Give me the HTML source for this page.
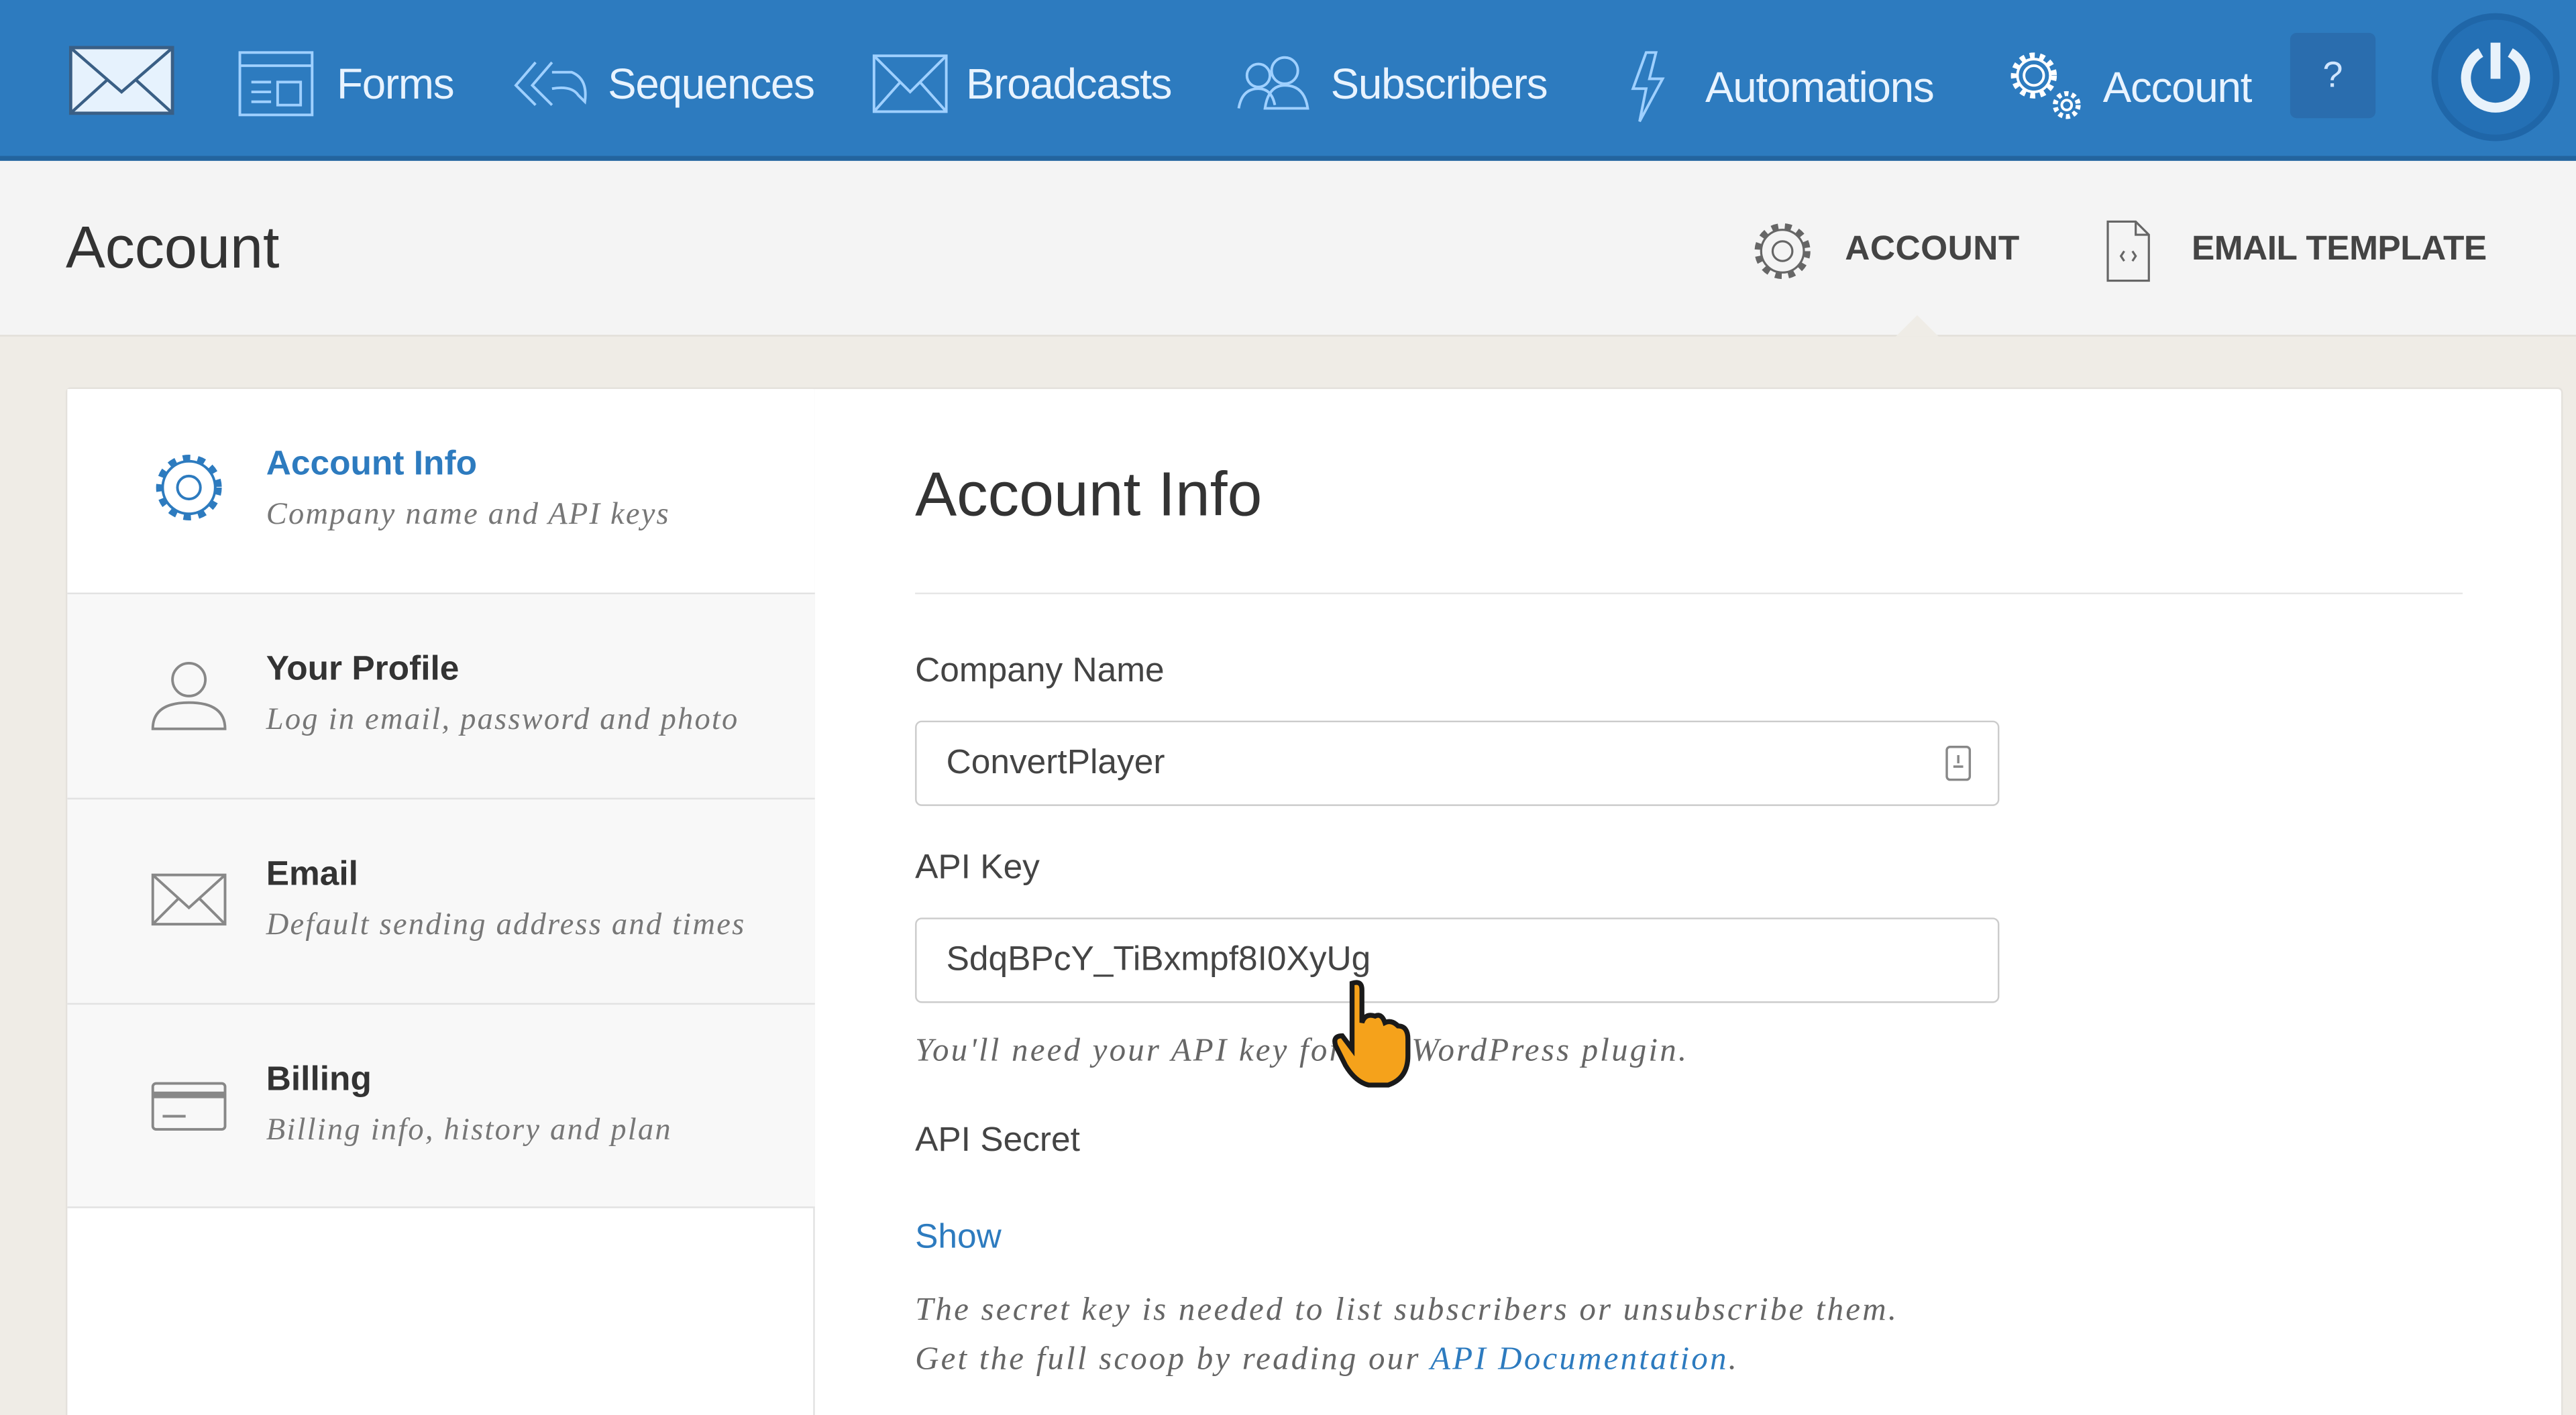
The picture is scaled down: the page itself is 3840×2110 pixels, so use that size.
<!DOCTYPE html>
<html><head><meta charset="utf-8"><style>
*{box-sizing:border-box;margin:0;padding:0}
html,body{width:3840px;height:2110px;overflow:hidden;background:#efece6}
#w{width:1568px;height:862px;transform:scale(2.44898,2.44780);transform-origin:0 0;position:relative;font-family:"Liberation Sans",sans-serif;background:#efece6;overflow:hidden}
.nav{position:absolute;left:0;top:0;width:1568px;height:98px;background:#2d7bbf;border-bottom:3px solid #23649e}
.nav .it{position:absolute;top:30px;color:#e8f3ff;font-size:26px;letter-spacing:-0.5px;display:flex;align-items:center}
.nav svg{stroke:#9fd0ff;fill:none;stroke-width:1.6}
.hdr{position:absolute;left:0;top:98px;width:1568px;height:107px;background:#f4f4f4;border-bottom:1px solid #e2dfd8}
.card{position:absolute;left:40px;top:236px;width:1520px;height:640px;background:#fff;border:1px solid #e4e1dc;border-radius:3px}
.side{position:absolute;left:0;top:0;width:455px;height:640px;border-right:1px solid #e2e2e2}
.si{position:absolute;left:0;width:455px;height:125px;background:#f8f8f8;border-top:1px solid #e2e2e2}
.si b{position:absolute;left:121px;top:34px;font-size:21px;color:#333}
.si i{position:absolute;left:121px;top:66px;font-family:"Liberation Serif",serif;font-size:19px;color:#777;letter-spacing:0.9px}
.si svg{position:absolute;left:50px;top:38px;stroke:#888;fill:none;stroke-width:1.6}
.lbl{position:absolute;left:516px;font-size:21px;color:#444}
.inp{position:absolute;left:516px;width:660px;height:52px;border:1.5px solid #ccc;border-radius:4px;font-size:21px;color:#444;padding:13px 18px}
.note{position:absolute;left:516px;font-family:"Liberation Serif",serif;font-style:italic;font-size:20px;color:#666;letter-spacing:1.3px}
</style></head><body><div id="w">
<div class="nav">
 <svg style="position:absolute;left:42px;top:28px" width="64" height="42"><rect x="1" y="1" width="62" height="40" fill="#e6f2fd" stroke="#3a5f85" stroke-width="2"/><path d="M2 2 L32 28 L62 2 M2 40 L24 20 M62 40 L40 20" stroke="#3a5f85" stroke-width="1.8" fill="none"/></svg>
 <div class="it" style="left:145px"><svg width="48" height="42"><rect x="1" y="2" width="44" height="38"/><path d="M1 10H45M8 20H20M8 26H20M8 32H20M24 20H38V34H24Z"/></svg><span style="margin-left:12px">Forms</span></div>
 <div class="it" style="left:312px"><svg width="48" height="42"><path d="M14 8L2 22L14 34M24 8L12 22L24 34M24 14L36 14Q46 18 44 32L40 28Q36 22 24 24"/></svg><span style="margin-left:10px">Sequences</span></div>
 <div class="it" style="left:530px"><svg width="48" height="42"><rect x="2" y="4" width="44" height="34"/><path d="M2 4L24 26L46 4M2 38L18 20M46 38L30 20"/></svg><span style="margin-left:10px">Broadcasts</span></div>
 <div class="it" style="left:752px"><svg width="48" height="42"><circle cx="14" cy="16" r="7"/><circle cx="30" cy="13" r="8"/><path d="M2 36Q4 24 14 24Q22 24 24 34M18 36Q20 22 30 22Q42 22 44 36Z"/></svg><span style="margin-left:10px">Subscribers</span></div>
 <div class="it" style="left:988px"><svg width="30" height="46"><path d="M14 2L6 24H14L10 44L24 18H16L20 2Z"/></svg><span style="margin-left:20px">Automations</span></div>
 <div class="it" style="left:1220px"><svg width="50" height="46" style="stroke:#fff"><circle cx="18" cy="16" r="6"/><circle cx="18" cy="16" r="12" stroke-width="4" stroke-dasharray="3 3"/><circle cx="18" cy="16" r="10"/><circle cx="38" cy="34" r="3"/><circle cx="38" cy="34" r="7" stroke-width="3" stroke-dasharray="2.5 2"/></svg><span style="margin-left:10px">Account</span></div>
 <div style="position:absolute;left:1394px;top:20px;width:52px;height:52px;background:#2a6dae;border-radius:4px;color:#cfe5ff;font-size:22px;text-align:center;line-height:52px">?</div>
 <div style="position:absolute;left:1480px;top:8px;width:78px;height:78px;border-radius:50%;background:#2470b5;border:4px solid #1f66a8"></div>
 <svg style="position:absolute;left:1490px;top:18px" width="58" height="58"><path d="M20 14A18 18 0 1 0 38 14" stroke="#e8f2fb" stroke-width="6" fill="none"/><path d="M29 8V30" stroke="#e8f2fb" stroke-width="6"/></svg>
</div>
<div class="hdr">
 <div style="position:absolute;left:40px;top:32px;font-size:36px;color:#333">Account</div>
 <svg style="position:absolute;left:1066px;top:36px;stroke:#666;fill:none;stroke-width:1.3" width="38" height="38"><circle cx="19" cy="19" r="6"/><circle cx="19" cy="19" r="13"/><circle cx="19" cy="19" r="15" stroke-width="4" stroke-dasharray="4 4"/></svg>
 <div style="position:absolute;left:1123px;top:42px;font-size:21px;font-weight:bold;color:#444;letter-spacing:.2px">ACCOUNT</div>
 <svg style="position:absolute;left:1282px;top:36px;stroke:#666;fill:none;stroke-width:1.3" width="28" height="38"><path d="M1 1H18L26 9V37H1Z M18 1V9H26 M11 19L9 22L11 25M16 19L18 22L16 25"/></svg>
 <div style="position:absolute;left:1334px;top:42px;font-size:21px;font-weight:bold;color:#444;letter-spacing:-.2px">EMAIL TEMPLATE</div>
 <div style="position:absolute;left:1154px;top:94px;width:0;height:0;border-left:13px solid transparent;border-right:13px solid transparent;border-bottom:13px solid #efece6"></div>
</div>
<div class="card">
 <div class="side">
  <div style="position:absolute;left:0;top:0;width:455px;height:124px;background:#fff">
   <svg style="position:absolute;left:50px;top:36px;stroke:#2d7bbf;fill:none;stroke-width:1.6" width="48" height="48"><circle cx="24" cy="24" r="7"/><circle cx="24" cy="24" r="16"/><circle cx="24" cy="24" r="18" stroke-width="4" stroke-dasharray="4.5 4.5"/></svg>
   <b style="position:absolute;left:121px;top:34px;font-size:21px;color:#2d7bbf">Account Info</b>
   <i style="position:absolute;left:121px;top:66px;font-family:'Liberation Serif',serif;font-size:19px;color:#777;letter-spacing:0.9px">Company name and API keys</i>
  </div>
  <div class="si" style="top:124px"><svg width="48" height="46"><circle cx="24" cy="14" r="10"/><path d="M2 44Q2 28 24 28Q46 28 46 44Z"/></svg><b>Your Profile</b><i>Log in email, password and photo</i></div>
  <div class="si" style="top:249px"><svg width="48" height="46"><rect x="2" y="8" width="44" height="30"/><path d="M2 8L24 28L46 8M2 38L18 22M46 38L30 22"/></svg><b>Email</b><i>Default sending address and times</i></div>
  <div class="si" style="top:374px"><svg width="48" height="46"><rect x="2" y="10" width="44" height="28" rx="2"/><path d="M2 17H46" stroke-width="4"/><path d="M8 30H22"/></svg><b>Billing</b><i>Billing info, history and plan</i></div>
  <div style="position:absolute;top:498px;left:0;width:455px;border-top:1px solid #e2e2e2"></div>
 </div>
 <div style="position:absolute;left:516px;top:44px;font-size:38px;color:#333">Account Info</div>
 <div style="position:absolute;left:516px;top:124px;width:942px;border-top:1px solid #e6e6e6"></div>
 <div class="lbl" style="top:160px">Company Name</div>
 <div class="inp" style="top:202px">ConvertPlayer<svg style="position:absolute;right:16px;top:14px;stroke:#888;fill:none;stroke-width:1.4" width="16" height="22"><rect x="1" y="1" width="14" height="20" rx="2"/><path d="M5 13H11M8 6V11"/></svg></div>
 <div class="lbl" style="top:280px">API Key</div>
 <div class="inp" style="top:322px">SdqBPcY_TiBxmpf8I0XyUg</div>
 <div class="note" style="top:392px">You'll need your API key for the WordPress plugin.</div>
 <div class="lbl" style="top:446px">API Secret</div>
 <div style="position:absolute;left:516px;top:505px;font-size:21px;color:#2d7bbf">Show</div>
 <div class="note" style="top:550px">The secret key is needed to list subscribers or unsubscribe them.</div>
 <div class="note" style="top:580px">Get the full scoop by reading our <span style="color:#2d7bbf">API Documentation</span>.</div>
 <svg style="position:absolute;left:768px;top:358px" width="60" height="72"><path d="M14 4Q20 2 20 8V28Q22 22 28 24Q32 22 34 28Q38 26 42 30Q48 30 48 38V48Q48 62 36 66H24Q16 64 10 54L4 42Q2 36 8 36L14 44V8Z" fill="#f5a21b" stroke="#1a1a1a" stroke-width="3"/></svg>
</div>
</div></body></html>
